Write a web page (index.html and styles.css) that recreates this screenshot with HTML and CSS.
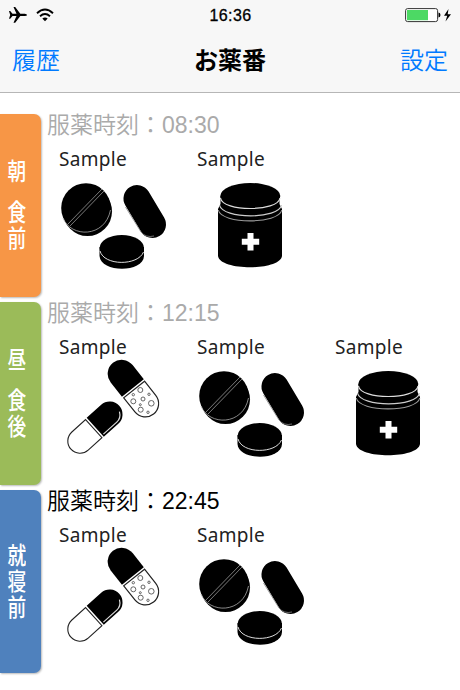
FILE: index.html
```html
<!DOCTYPE html>
<html lang="ja">
<head>
  <meta charset="UTF-8">
  <meta name="viewport" content="width=device-width, initial-scale=1.0">
  <title>お薬番</title>
  <link rel="stylesheet" href="styles.css">
</head>
<body>
  <svg class="defs" width="0" height="0">
    <symbol id="tablets" viewBox="0 0 120 110">
      <circle cx="32.500" cy="40.500" r="24.500"/>
      <circle cx="31" cy="37" r="24.800"/>
      <path d="M8 47c8 20 42 20 47.500-8" fill="none" stroke="#aaa" stroke-width=".8"/>
      <path d="M12.500 53.500 47 18M15 55 49 20" stroke="#999" stroke-width=".8"/>
      <path d="M82 27.500 97.500 53.500" stroke="#000" stroke-width="27" stroke-linecap="round"/>
      <path d="M70.500 36 86 61q5 6 13 4" fill="none" stroke="#888" stroke-width=".8"/>
      <path d="M44.500 76v9c1 17 44 17 44.500 0v-9z"/>
      <ellipse cx="66.800" cy="77" rx="22.200" ry="13"/>
      <path d="M45 80c4 15 38 15 43.500 1" fill="none" stroke="#ddd"/>
    </symbol>
    <symbol id="jar" viewBox="0 0 120 110">
      <path d="M27.500 25v8L25 38v47c2 15 62 15 64 0V38l-2.500-5v-8z"/>
      <ellipse cx="57.300" cy="25" rx="30" ry="13"/>
      <path d="M27.500 27c2 14 57.500 14 59.500 0" fill="none" stroke="#ddd" stroke-width="1.200"/>
      <path d="M26.500 34c3 14.500 59.500 14.500 62 0" fill="none" stroke="#ccc" stroke-width="1.200"/>
      <path d="M25.300 39c3 14.500 60.500 14.500 63.500 0" fill="none" stroke="#999" stroke-width="1.100"/>
      <path d="M54.500 62h6v5.700h5.700v6h-5.700v5.700h-6v-5.700h-5.700v-6h5.700z" fill="#fff"/>
    </symbol>
    <symbol id="capsules" viewBox="0 0 120 110">
      <g transform="translate(78.500 29.700) rotate(51.500)">
        <path d="M-1-14v28h-18a14 14 0 0 1 0-28z"/>
        <path d="M1-13.300v26.600h18a13.300 13.300 0 0 0 0-26.600z" fill="#fff" stroke="#222" stroke-width="1.200"/>
      </g>
      <g fill="none" stroke="#555" stroke-width=".9">
        <circle cx="85.300" cy="31" r="2.500"/>
        <circle cx="78.300" cy="35.700" r="1.200"/>
        <circle cx="78.300" cy="42.300" r="2.500"/>
        <circle cx="88" cy="40" r="2"/>
        <circle cx="96.300" cy="44.300" r="2.800"/>
        <circle cx="85.700" cy="50.700" r="2.500"/>
        <circle cx="85.300" cy="45.700" r="1"/>
        <circle cx="94" cy="35.300" r="1.200"/>
        <circle cx="93" cy="53.300" r="1.200"/>
      </g>
      <g transform="translate(39.500 69) rotate(-42)">
        <path d="M-1-12.200v24.400h-18.500a12.200 12.200 0 0 1 0-24.400z" fill="#fff" stroke="#222" stroke-width="1.100"/>
        <path d="M1-12.800v25.600h19.500a12.800 12.800 0 0 0 0-25.600z"/>
        <path d="M2.500 10.500h18q6 0 9-6" fill="none" stroke="#ddd" stroke-width="1.200"/>
      </g>
    </symbol>
  </svg>

  <header class="header">
    <div class="status">
      <div class="status-left">
        <svg width="18" height="16" viewBox="0 0 18 16"><path d="M0 4h1.200l2.300 2.800h4L4.500 0h1.700l5.100 6.800h4.500q2.200.3 2.200 1.100t-2.200 1.100h-4.500l-5.100 6.800H4.500L7.500 9h-4l-2.300 2.800H0L1.200 7.900z"/></svg>
        <svg class="wifi" width="18" height="14" viewBox="0 0 18 14"><path d="M1 5.200Q9-2 17 5.200M4 8.300q5-4.400 10 0" fill="none" stroke="#000" stroke-width="1.900"/><path d="M6.300 10.500q2.700-2.200 5.400 0L9 13.200z"/></svg>
      </div>
      <div class="clock">16:36</div>
      <div class="status-right">
        <svg width="47" height="16" viewBox="0 0 47 16"><rect x=".6" y="1.600" width="32" height="13" rx="2" fill="#fff" stroke="#333"/><rect x="2" y="3" width="21" height="10.200" fill="#4cd964"/><path d="M33.500 5.500q2 .3 2 2.500t-2 2.500z"/><path d="M43.500 2 39 8.700h3.200L40.500 14.500l5.500-7.200h-3.300z"/></svg>
      </div>
    </div>
    <div class="nav">
      <a class="nav-link">履歴</a>
      <h1>お薬番</h1>
      <a class="nav-link">設定</a>
    </div>
  </header>

  <main class="list">
    <section class="row">
      <div class="tab morning"><span class="tab-text">朝<i class="space"></i>食前</span></div>
      <div class="detail">
        <div class="time">服薬時刻：08:30</div>
        <div class="items">
          <div class="item"><div class="name">Sample</div><svg class="pic"><use href="#tablets"/></svg></div>
          <div class="item"><div class="name">Sample</div><svg class="pic"><use href="#jar"/></svg></div>
        </div>
      </div>
    </section>
    <section class="row">
      <div class="tab noon"><span class="tab-text">昼<i class="space"></i>食後</span></div>
      <div class="detail">
        <div class="time">服薬時刻：12:15</div>
        <div class="items">
          <div class="item"><div class="name">Sample</div><svg class="pic"><use href="#capsules"/></svg></div>
          <div class="item"><div class="name">Sample</div><svg class="pic"><use href="#tablets"/></svg></div>
          <div class="item"><div class="name">Sample</div><svg class="pic"><use href="#jar"/></svg></div>
        </div>
      </div>
    </section>
    <section class="row">
      <div class="tab night"><span class="tab-text">就寝前</span></div>
      <div class="detail">
        <div class="time next">服薬時刻：22:45</div>
        <div class="items">
          <div class="item"><div class="name">Sample</div><svg class="pic"><use href="#capsules"/></svg></div>
          <div class="item"><div class="name">Sample</div><svg class="pic"><use href="#tablets"/></svg></div>
        </div>
      </div>
    </section>
  </main>
</body>
</html>
```
FILE: styles.css
```css
* {
  box-sizing: border-box;
}

body {
  margin: 0;
  background: #fff;
  font-family: "Liberation Sans", "Noto Sans CJK JP", sans-serif;
  overflow: hidden;
}

.defs {
  display: block;
}

.header {
  height: 93px;
  background: #f7f7f7;
  border-bottom: 1px solid #b6b6b6;
}

.status {
  display: grid;
  grid-template-columns: 1fr auto 1fr;
  align-items: center;
  height: 30px;
  padding: 0 8px 0 9px;
}

.status-left {
  display: flex;
  align-items: center;
  gap: 9px;
}

.status-right {
  display: flex;
  justify-content: flex-end;
}

.clock {
  padding-top: 1px;
  font-size: 16px;
  letter-spacing: 0.4px;
  -webkit-text-stroke: 0.3px #000;
}

.nav {
  display: flex;
  justify-content: space-between;
  align-items: center;
  height: 56px;
  padding: 0 12px;
}

.nav-link {
  font-size: 24px;
  font-weight: 350;
  color: #007aff;
}

h1 {
  margin: 0;
  font-size: 24px;
  font-weight: bold;
}

.list {
  padding-top: 21px;
}

.row {
  display: flex;
  height: 188px;
}

.tab {
  display: flex;
  flex-shrink: 0;
  justify-content: center;
  align-items: center;
  width: 41px;
  height: 183px;
  padding-right: 9px;
  border-radius: 0 7px 7px 0;
  box-shadow: 1px 1px 2px #bbb;
  color: #fff;
}

.morning {
  background: #f79646;
}

.noon {
  background: #9bbb59;
}

.night {
  background: #4f81bd;
}

.tab-text {
  margin-right: 3px;
  writing-mode: vertical-rl;
  font-size: 24px;
  font-weight: 500;
  line-height: 24px;
  letter-spacing: 2px;
  transform: scaleX(0.78);
}

.space {
  display: inline-block;
  height: 15px;
}

.detail {
  flex-shrink: 0;
  padding-left: 6px;
}

.time {
  height: 35px;
  margin-top: -7px;
  font-size: 23px;
  font-weight: 350;
  line-height: 36px;
  color: #aaa;
}

.next {
  color: #000;
}

.items {
  display: flex;
  padding-left: 8px;
}

.item {
  width: 138px;
}

.name {
  height: 29px;
  padding-left: 4px;
  font-family: "Noto Sans", sans-serif;
  font-size: 19px;
  line-height: 34px;
  letter-spacing: 0.3px;
  color: #222;
}

.pic {
  display: block;
  width: 120px;
  height: 110px;
}
```
